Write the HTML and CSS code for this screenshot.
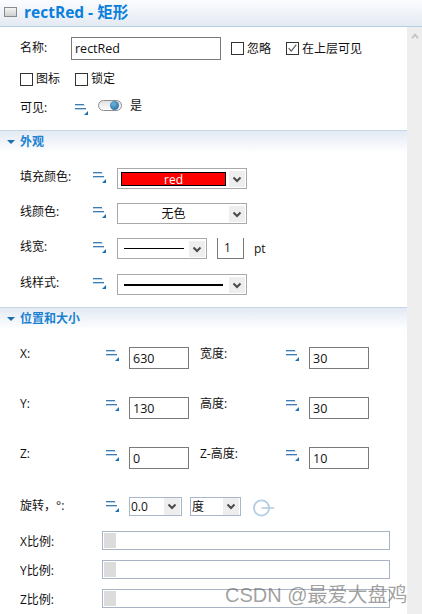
FILE: index.html
```html
<!DOCTYPE html>
<html lang="zh">
<head>
<meta charset="utf-8">
<title>rectRed - 矩形</title>
<link rel="stylesheet" href="styles.css">
</head>
<body>
<svg class="defs" width="0" height="0" aria-hidden="true">
  <symbol id="link" viewBox="0 0 13 11">
    <rect x="0" y="0" width="9" height="1.3" fill="#3b7cb4"/>
    <rect x="0" y="1.3" width="10" height="0.7" fill="#bcd2e6"/>
    <rect x="0" y="4" width="11" height="1.3" fill="#3b7cb4"/>
    <rect x="0" y="5.3" width="11" height="0.7" fill="#bcd2e6"/>
    <polygon points="13,7 13,11 9,11" fill="#1c6fb0"/>
  </symbol>
  <symbol id="chev" viewBox="0 0 16 16">
    <polyline points="4.5,6.5 8,10 11.5,6.5" fill="none" stroke="#4a4a4a" stroke-width="2"/>
  </symbol>
</svg>
<header class="title">
  <span class="title-icon"></span>
  <span class="title-text">rectRed - 矩形</span>
</header>
<div class="layout">
  <main class="main">
    <section class="general">
      <div class="name-row">
        <label class="name-label">名称:</label>
        <input class="field name-field" value="rectRed" readonly>
        <span class="check ignore"><i class="box"></i>忽略</span>
        <span class="check"><i class="box">
          <svg viewBox="0 0 13 13" width="11" height="11"><polyline points="2,6 5,9.5 11,2" fill="none" stroke="#555" stroke-width="1.3"/></svg>
        </i>在上层可见</span>
      </div>
      <div class="check-row">
        <span class="check"><i class="box"></i>图标</span>
        <span class="check"><i class="box"></i>锁定</span>
      </div>
      <div class="visible-row">
        <label class="vis-label">可见:</label>
        <svg class="link vis-link"><use href="#link"/></svg>
        <span class="toggle"><i class="ball"></i></span>
        <span class="yes">是</span>
      </div>
    </section>

    <h2 class="sec-head"><i class="tri"></i>外观</h2>
    <section class="appearance">
      <div class="a-row">
        <label class="a-label">填充颜色:</label>
        <svg class="link"><use href="#link"/></svg>
        <div class="select wide">
          <span class="swatch">red</span>
          <span class="arrow"><svg viewBox="0 0 16 16"><use href="#chev"/></svg></span>
        </div>
      </div>
      <div class="a-row">
        <label class="a-label">线颜色:</label>
        <svg class="link"><use href="#link"/></svg>
        <div class="select wide">
          <span class="sel-center">无色</span>
          <span class="arrow"><svg viewBox="0 0 16 16"><use href="#chev"/></svg></span>
        </div>
      </div>
      <div class="a-row">
        <label class="a-label">线宽:</label>
        <svg class="link"><use href="#link"/></svg>
        <div class="select mid">
          <span class="line thin"></span>
          <span class="arrow"><svg viewBox="0 0 16 16"><use href="#chev"/></svg></span>
        </div>
        <span class="spin">1</span>
        <span class="unit">pt</span>
      </div>
      <div class="a-row">
        <label class="a-label">线样式:</label>
        <svg class="link"><use href="#link"/></svg>
        <div class="select wide">
          <span class="line thick"></span>
          <span class="arrow"><svg viewBox="0 0 16 16"><use href="#chev"/></svg></span>
        </div>
      </div>
    </section>

    <h2 class="sec-head"><i class="tri"></i>位置和大小</h2>
    <section class="position">
      <div class="pos-grid">
        <label>X:</label><svg class="link"><use href="#link"/></svg><input class="field num" value="630" readonly>
        <label>宽度:</label><svg class="link"><use href="#link"/></svg><input class="field num" value="30" readonly>
        <label>Y:</label><svg class="link"><use href="#link"/></svg><input class="field num" value="130" readonly>
        <label>高度:</label><svg class="link"><use href="#link"/></svg><input class="field num" value="30" readonly>
        <label>Z:</label><svg class="link"><use href="#link"/></svg><input class="field num" value="0" readonly>
        <label>Z-高度:</label><svg class="link"><use href="#link"/></svg><input class="field num" value="10" readonly>
      </div>
      <div class="rot-row">
        <label class="rot-label">旋转&#xFF0C;°:</label>
        <svg class="link"><use href="#link"/></svg>
        <div class="select rot r1"><span class="rot-val">0.0</span><span class="arrow"><svg viewBox="0 0 16 16"><use href="#chev"/></svg></span></div>
        <div class="select rot r2"><span class="rot-val">度</span><span class="arrow"><svg viewBox="0 0 16 16"><use href="#chev"/></svg></span></div>
        <svg class="dial" viewBox="0 0 21 18" width="21" height="18">
          <circle cx="8.5" cy="9" r="7.6" fill="none" stroke="#b4cde2" stroke-width="1.8"/>
          <line x1="8.5" y1="9" x2="21" y2="9" stroke="#b4cde2" stroke-width="1.6"/>
        </svg>
      </div>
      <div class="slider-row"><label>X比例:</label><div class="slider"><i class="thumb"></i></div></div>
      <div class="slider-row"><label>Y比例:</label><div class="slider"><i class="thumb"></i></div></div>
      <div class="slider-row"><label>Z比例:</label><div class="slider"><i class="thumb"></i></div></div>
    </section>
  </main>
  <aside class="scrollbar">
    <svg viewBox="0 0 9 7" width="8" height="6"><polyline points="1,6 4.5,2 8,6" fill="none" stroke="#c4c4c4" stroke-width="2.2"/></svg>
  </aside>
</div>
<div class="watermark">CSDN @最爱大盘鸡</div>
</body>
</html>
```

FILE: styles.css
```css
* { box-sizing: border-box; }
html, body { margin: 0; height: 100%; }
body {
  width: 422px;
  height: 614px;
  overflow: hidden;
  position: relative;
  background: #fff;
  color: #111;
  font: 12px/16px "Open Sans", "Noto Sans CJK SC", sans-serif;
}
.defs { position: absolute; }
label { display: block; }

.title {
  height: 27px;
  display: flex;
  align-items: center;
  padding-left: 4px;
  background: linear-gradient(#fbfcfe, #e4eaf3);
  border-bottom: 1px solid #b5cfe3;
}
.title-icon {
  width: 13px;
  height: 10px;
  margin-top: -3px;
  border: 1px solid #8a8a8a;
  background: linear-gradient(#f4f4f4, #cfcfcf);
}
.title-text {
  margin-left: 7px;
  margin-top: -2px;
  font-size: 15.5px;
  font-weight: 700;
  color: #0b7fdc;
}

.layout { display: flex; height: 587px; }
.main { width: 407px; }
.scrollbar {
  width: 15px;
  background: #eeeeee;
  display: flex;
  justify-content: center;
  align-items: flex-start;
  padding-top: 6px;
}

.field {
  display: block;
  margin: 0;
  border: 1px solid #7b7b7b;
  border-radius: 0;
  outline: 0;
  background: #fff;
  color: #111;
  font: 12.5px "Open Sans", sans-serif;
  padding: 0 3px;
}

.general { padding: 10px 0 15px 20px; }
.name-row { display: flex; align-items: center; height: 23px; }
.name-label { width: 51px; margin-top: -1px; }
.name-field { width: 150px; height: 23px; }
.check { display: flex; align-items: center; gap: 3px; }
.box {
  width: 13px;
  height: 13px;
  border: 1px solid #333;
  display: flex;
  align-items: center;
  justify-content: center;
  background: #fff;
}
.ignore { margin: 0 10px; width: 45px; }
.check-row { display: flex; gap: 10px; margin-top: 11px; height: 16px; }
.check-row .check { width: 45px; }
.visible-row { display: flex; align-items: center; height: 16px; margin-top: 12px; }
.vis-label { width: 55px; margin-top: 2px; }
.link { width: 13px; height: 11px; flex: none; display: block; }
.vis-link { margin-top: 5px; }
.toggle {
  width: 24px;
  height: 11px;
  margin: -4px 0 0 10px;
  border: 1px solid #8e8e8e;
  border-radius: 6px;
  background: linear-gradient(#e2e2e2, #fdfdfd);
  position: relative;
}
.ball {
  position: absolute;
  right: 2px;
  top: 0;
  width: 9px;
  height: 9px;
  border-radius: 50%;
  background: radial-gradient(circle at 40% 35%, #6fb4de, #145d92);
}
.yes { margin: -3px 0 0 8px; }

.sec-head {
  height: 23px;
  margin: 0;
  display: flex;
  align-items: center;
  padding-left: 7px;
  border-top: 1px solid #c5d6e4;
  background: linear-gradient(#e3eaf4, #ffffff);
  font-size: 12px;
  font-weight: 700;
  color: #1b82d2;
}
.tri {
  width: 0;
  height: 0;
  border-left: 4px solid transparent;
  border-right: 4px solid transparent;
  border-top: 4px solid #1c6fb0;
  margin-right: 5px;
}

.appearance { padding: 15px 0 12px 20px; }
.a-row { display: flex; align-items: center; height: 21px; margin-bottom: 14px; }
.a-row:nth-child(3) { margin-bottom: 15px; }
.a-row:last-child { margin-bottom: 0; }
.a-label { width: 73px; margin-top: -4px; }
.a-row .link { margin-top: -2px; }
.select {
  height: 21px;
  border: 1px solid #a9a9a9;
  display: flex;
  align-items: center;
  background: #fff;
  flex: none;
}
.wide { width: 130px; margin-left: 11px; }
.mid { width: 90px; margin-left: 11px; }
.arrow {
  width: 16px;
  height: 16px;
  margin: 0 1px 0 auto;
  background: #eeeeee;
  flex: none;
}
.arrow svg { display: block; width: 16px; height: 16px; }
.swatch {
  width: 105px;
  height: 14px;
  margin-left: 3px;
  margin-right: 3px;
  background: #ff0000;
  border: 1px solid #000;
  color: #fff;
  text-align: center;
  font-size: 12px;
  line-height: 13px;
}
.sel-center { flex: 1; text-align: center; }
.line { display: block; margin-left: 6px; background: #000; }
.thin { width: 60px; height: 1px; }
.thick { width: 99px; height: 2px; }
.spin {
  width: 27px;
  height: 21px;
  margin-left: 10px;
  border: 1px solid #7b7b7b;
  border-top: 0;
  padding-left: 6px;
  font-family: "Open Sans", sans-serif;
  line-height: 20px;
}
.unit { margin-left: 10px; font-family: "Open Sans", sans-serif; }

.position { padding: 17px 0 0 20px; }
.pos-grid {
  display: grid;
  grid-template-columns: 86px 23px 71px 86px 23px 60px;
  grid-auto-rows: 22px;
  row-gap: 28px;
}
.pos-grid label { margin-top: -1px; }
.pos-grid .link { margin-top: 3px; }
.num { width: 60px; height: 22px; }

.rot-row { display: flex; align-items: center; height: 19px; margin-top: 28px; }
.rot-label { width: 86px; margin-top: -1px; }
.rot { height: 19px; border-color: #a8b8cc; }
.rot-val { padding-left: 1px; }
.r1 { width: 53px; margin-left: 10px; }
.r2 { width: 51px; margin-left: 8px; }
.rot .arrow { height: 17px; }
.dial { margin: 2px 0 0 12px; flex: none; }

.slider-row { display: flex; align-items: center; height: 19px; margin-top: 10px; }
.rot-row + .slider-row { margin-top: 15px; }
.slider-row label { width: 82px; margin-top: 2px; }
.slider {
  width: 288px;
  height: 19px;
  border: 1px solid #a8b4c4;
  padding: 1px;
  background: #fff;
}
.thumb { display: block; width: 12px; height: 15px; background: #dcdcdc; }

.watermark {
  position: absolute;
  left: 225px;
  top: 583px;
  font: 20px/24px "Liberation Sans", "Noto Sans CJK SC", sans-serif;
  color: rgba(90, 90, 90, 0.58);
  white-space: nowrap;
}
```
